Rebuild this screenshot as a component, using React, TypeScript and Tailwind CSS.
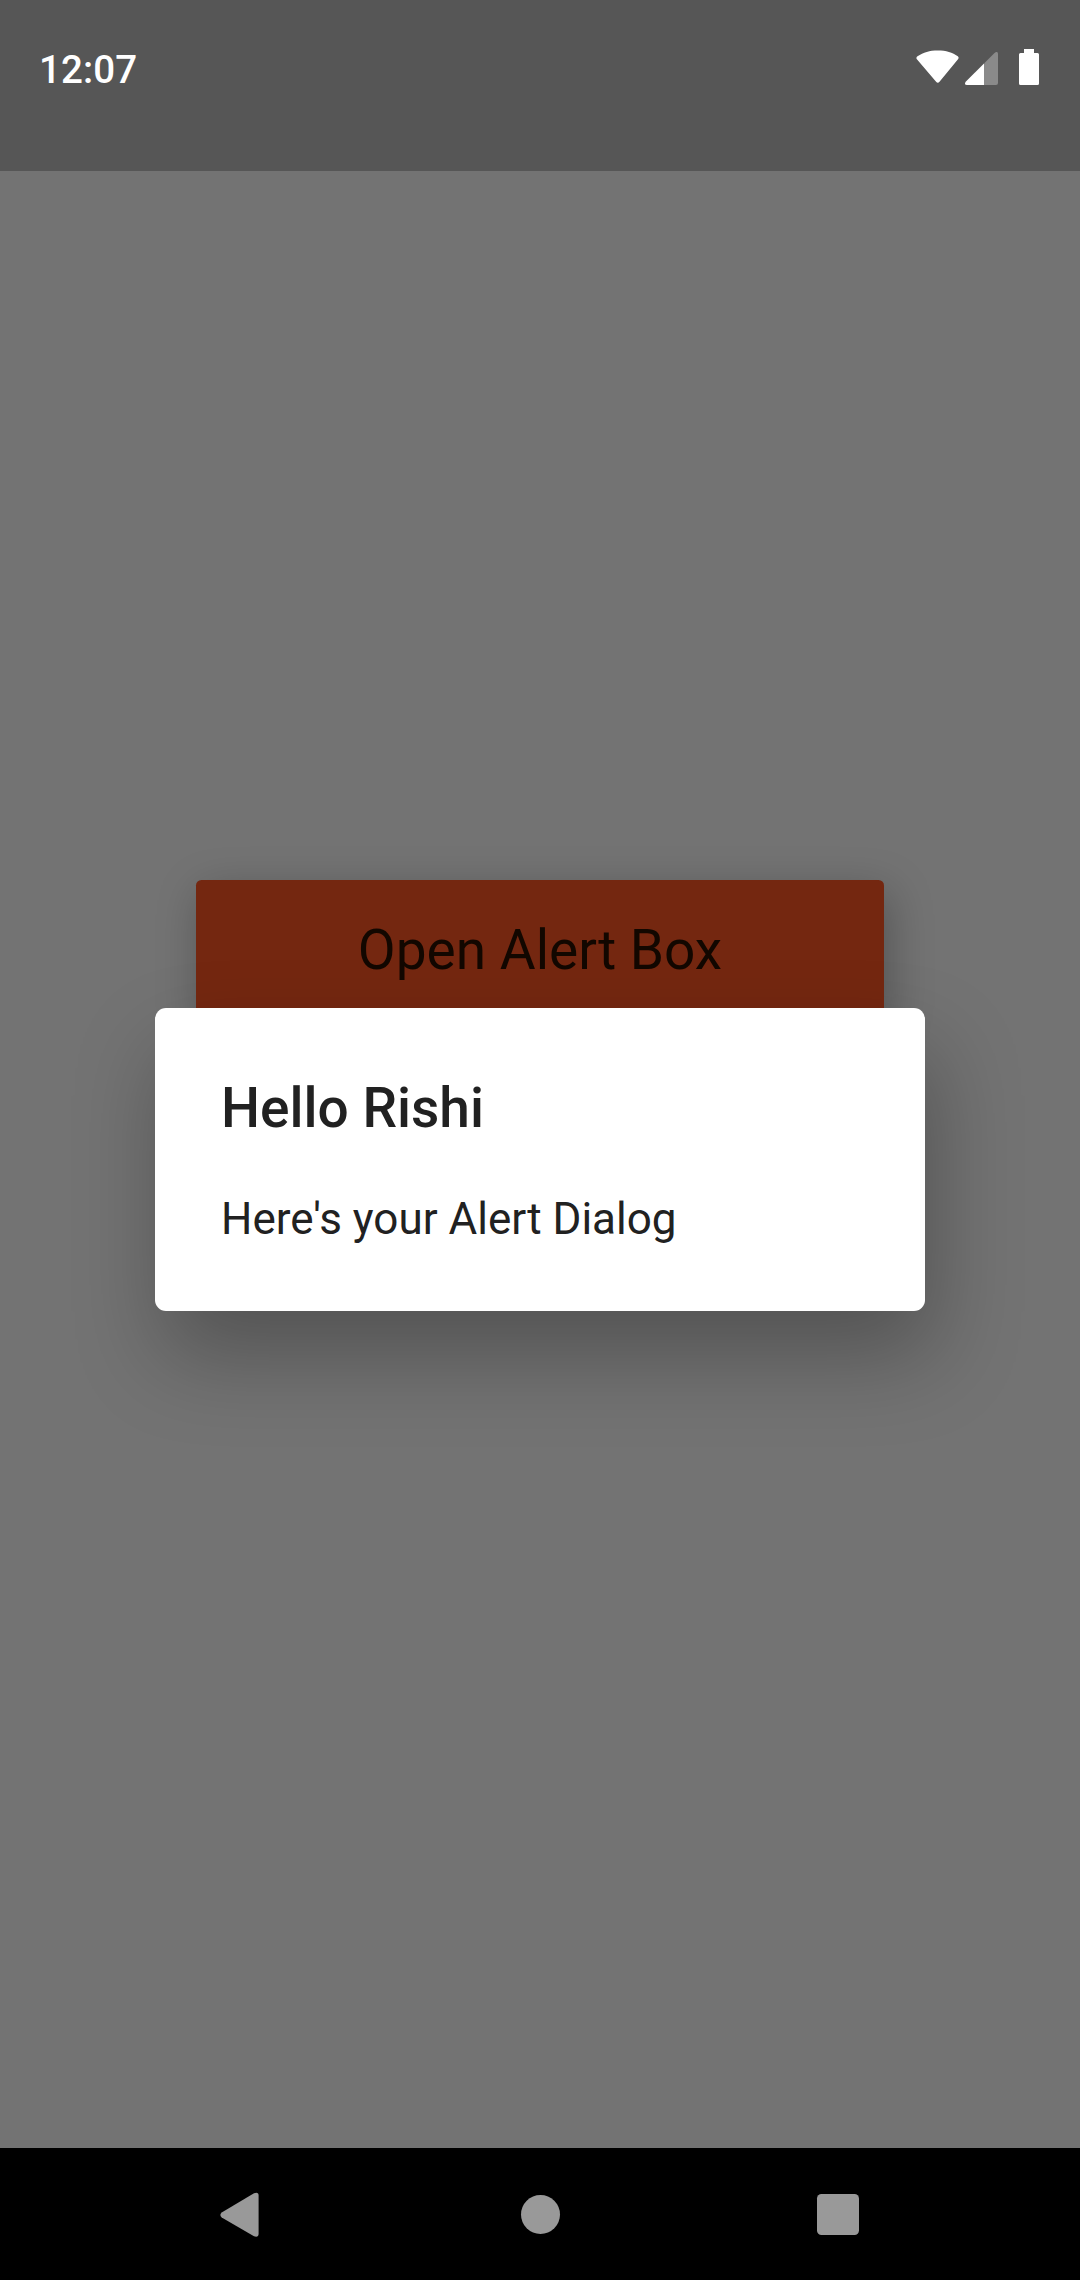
function StatusBar() {
  return (
    <header className="flex h-[171px] shrink-0 items-start justify-between bg-[#565656] pl-[39px] pr-[41px] text-white">
      <span className="mt-[47px] text-[38.5px] font-medium leading-[45px] tracking-[0.1px]">12:07</span>
      <div className="mt-[49px] flex items-start">
        <svg className="mr-[5px] mt-px" width="44" height="35" viewBox="0 0 44 35" fill="currentColor">
          <path d="M1.500 6.200C7.500 2.500 13.500 .5 21.800 .5S36.500 2.500 41.800 6.200Q43.300 7.600 42 9.300L23.500 31.800Q21.800 33.800 20.100 31.800L.9 9.300Q-.3 7.600 1.500 6.200Z" />
        </svg>
        <svg className="mr-[21px] mt-[3px]" width="33" height="33" viewBox="0 0 33 33" fill="currentColor">
          <path fill="#8a8a8a" d="M19 11.500 29.500 1Q33 -1.500 33 2V31Q33 33 31 33H19Z" />
          <path d="M19 11.500V33H2Q-1.200 33 .7 29.800Z" />
        </svg>
        <svg width="20" height="36" viewBox="0 0 20 36" fill="currentColor">
          <path d="M5 0H15V4H18.500Q20 4 20 5.500V34.500Q20 36 18.500 36H1.500Q0 36 0 34.500V5.500Q0 4 1.500 4H5Z" />
        </svg>
      </div>
    </header>
  );
}

function NavigationBar() {
  return (
    <nav className="flex h-[132px] shrink-0 items-center bg-black pl-[220px] text-[#999999]">
      <svg className="mt-px" width="39" height="46" viewBox="0 0 39 46" fill="currentColor">
        <path d="M1.700 20.400 34 1.200Q38.600 -.5 38.600 3.500V41.500Q38.600 45.800 34 44.300L1.700 25.400Q-1 23 1.700 20.400Z" />
      </svg>
      <span className="ml-[262px] size-[39px] rounded-full bg-[#999999]" />
      <span className="ml-[257px] mt-px size-[41.5px] rounded-[4.5px] bg-[#999999]" />
    </nav>
  );
}

function AlertDialog() {
  return (
    <div className="absolute inset-0 flex items-center justify-center pt-[39px]">
      <section
        role="dialog"
        aria-labelledby="dialog-title"
        className="h-[302.5px] w-[770px] rounded-[11px] bg-white px-[66px] pt-[67.5px] text-[#212121] shadow-[8px_44px_88px_rgba(0,0,0,0.28)]"
      >
        <h1 id="dialog-title" className="text-[55px] font-medium leading-[65px]">
          Hello Rishi
        </h1>
        <p className="mt-[52px] text-[44px] leading-[52px]">Here's your Alert Dialog</p>
      </section>
    </div>
  );
}

export default function App() {
  return (
    <div className="relative flex h-[2280px] w-[1080px] flex-col overflow-hidden bg-[#737373] font-['Roboto',sans-serif]">
      <StatusBar />
      <main className="flex flex-1 flex-col items-center pt-[709px]">
        <button className="h-[137.5px] w-[687.5px] rounded-[5.5px] bg-[#742710] pt-[3px] text-[55px] leading-[65px] text-[#120700] shadow-[5px_12px_44px_rgba(0,0,0,0.27)]">
          Open Alert Box
        </button>
      </main>
      <NavigationBar />
      <AlertDialog />
    </div>
  );
}
